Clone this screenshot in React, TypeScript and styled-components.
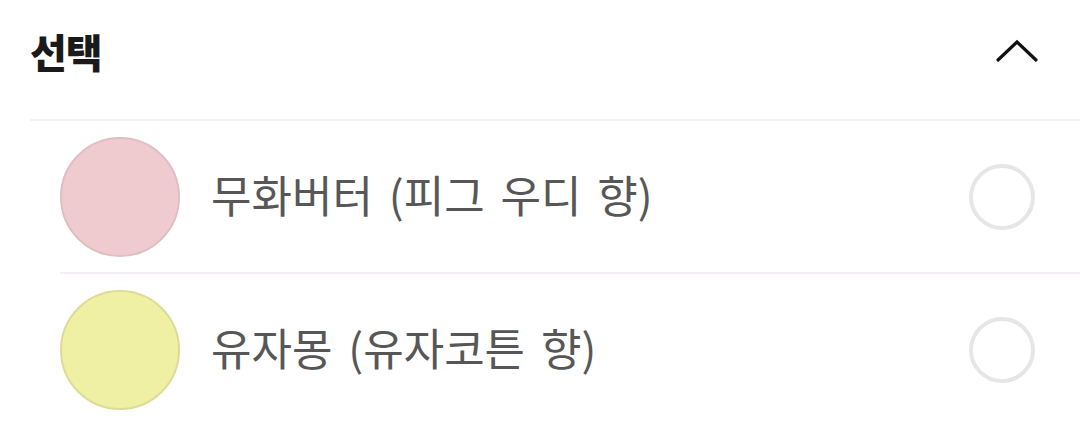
import React from "react";
import styled, { createGlobalStyle } from "styled-components";

const GlobalStyle = createGlobalStyle`
  html, body {
    margin: 0;
    padding: 0;
    background: #ffffff;
  }
  body {
    font-family: "Noto Sans CJK KR", "Noto Sans", sans-serif;
  }
`;

const Panel = styled.section`
  width: 1080px;
  padding-left: 30px;
  box-sizing: border-box;
`;

const Header = styled.div`
  height: 121px;
  box-sizing: border-box;
  display: flex;
  align-items: center;
  justify-content: space-between;
  padding: 0 42px 18px 0;
  border-bottom: 2px solid #f4f2f5;
`;

const Title = styled.h2`
  margin: 0;
  font-size: 40px;
  font-weight: 900;
  color: #1a1a1a;
  letter-spacing: -1px;
  line-height: 1;
`;

const Toggle = styled.button`
  border: 0;
  background: none;
  padding: 0;
  display: flex;
  cursor: pointer;
`;

const List = styled.ul`
  list-style: none;
  margin: 0 0 0 30px;
  padding: 0;
`;

const Row = styled.li`
  height: 151px;
  display: flex;
  align-items: center;
  padding-right: 45px;
  & + & {
    border-top: 2px solid #f4f0f6;
  }
`;

const Swatch = styled.span<{ $fill: string; $edge: string }>`
  width: 120px;
  height: 120px;
  border-radius: 50%;
  box-sizing: border-box;
  background: ${(p) => p.$fill};
  border: 2px solid ${(p) => p.$edge};
  flex-shrink: 0;
`;

const Label = styled.span`
  flex: 1;
  margin-left: 31px;
  padding-bottom: 5px;
  font-size: 44px;
  font-weight: 400;
  color: #575757;
  word-spacing: 6px;
  line-height: 1;
`;

const Radio = styled.span`
  width: 66px;
  height: 66px;
  border-radius: 50%;
  box-sizing: border-box;
  border: 4px solid #e6e6e6;
  flex-shrink: 0;
`;

const options = [
  { name: "무화버터 (피그 우디 향)", fill: "#efcbd0", edge: "#dfbfc3" },
  { name: "유자몽 (유자코튼 향)", fill: "#eff0a3", edge: "#dcdc98" },
];

export default function App() {
  return (
    <>
      <GlobalStyle />
      <Panel>
        <Header>
          <Title>선택</Title>
          <Toggle aria-label="접기">
            <svg width="42" height="24" viewBox="0 0 42 24" fill="none">
              <path
                d="M2 21 L21 3 L40 21"
                stroke="#111"
                strokeWidth="3.2"
                strokeLinecap="round"
                strokeLinejoin="miter"
              />
            </svg>
          </Toggle>
        </Header>
        <List>
          {options.map((o) => (
            <Row key={o.name}>
              <Swatch $fill={o.fill} $edge={o.edge} />
              <Label>{o.name}</Label>
              <Radio />
            </Row>
          ))}
        </List>
      </Panel>
    </>
  );
}
